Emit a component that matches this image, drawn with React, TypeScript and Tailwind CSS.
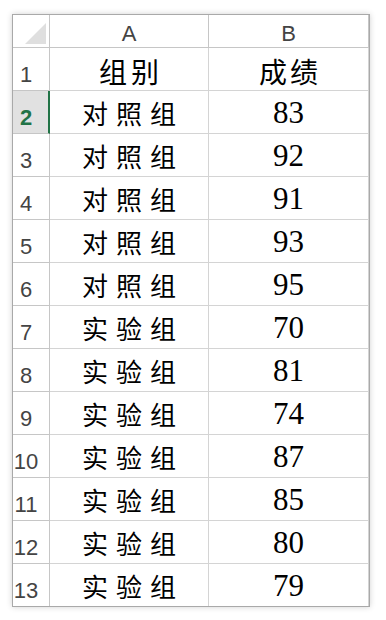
import React from "react";

const rows: [string, string][] = [
  ["对照组", "83"],
  ["对照组", "92"],
  ["对照组", "91"],
  ["对照组", "93"],
  ["对照组", "95"],
  ["实验组", "70"],
  ["实验组", "81"],
  ["实验组", "74"],
  ["实验组", "87"],
  ["实验组", "85"],
  ["实验组", "80"],
  ["实验组", "79"],
];

export default function App() {
  return (
    <div className="w-[386px] h-[620px] bg-white pt-[14px] pl-[12px]">
      <div className="w-[358px] border border-[#a9a9a9] shadow-[0_0_6px_rgba(0,0,0,0.18)] bg-white">
        <div className="grid grid-cols-[37px_159px_160px]">
          {/* header row */}
          <div className="h-[33px] border-r border-b border-[#c6c6c6] relative">
            <svg className="absolute left-[12px] top-[8px]" width="22" height="22" viewBox="0 0 22 22">
              <polygon points="21,0 21,21 0,21" fill="#dfdfdf" />
            </svg>
          </div>
          <div className="h-[33px] border-r border-b border-[#c6c6c6] flex items-end justify-center pb-[2px] font-['Liberation_Sans',Arial,sans-serif] text-[22px] leading-none text-[#444]">
            A
          </div>
          <div className="h-[33px] border-r border-b border-[#c6c6c6] flex items-end justify-center pb-[2px] font-['Liberation_Sans',Arial,sans-serif] text-[22px] leading-none text-[#444]">
            B
          </div>

          {/* row 1 */}
          <div className="h-[43px] border-r border-b border-[#c6c6c6] flex items-end justify-center pr-[10px] pb-[4px] font-['Liberation_Sans',Arial,sans-serif] text-[22px] leading-none text-[#444]">
            1
          </div>
          <div className="h-[43px] border-r border-b border-[#d4d4d4] flex items-end justify-center pb-[5px] pl-[4px] font-['Noto_Sans_CJK_SC',sans-serif] text-[28px] leading-none tracking-[4px] text-black">
            组别
          </div>
          <div className="h-[43px] border-r border-b border-[#d4d4d4] flex items-end justify-center pb-[5px] pl-[3px] font-['Noto_Sans_CJK_SC',sans-serif] text-[28px] leading-none tracking-[3px] text-black">
            成绩
          </div>

          {rows.map(([g, s], i) => {
            const n = i + 2;
            const last = i === rows.length - 1;
            const selected = n === 2;
            return (
              <React.Fragment key={n}>
                <div
                  className={
                    selected
                      ? "h-[43px] border-r-2 border-r-[#217346] border-b border-b-[#c6c6c6] bg-[#e1e1e1] flex items-end justify-center pr-[9px] pb-[4px] font-['Liberation_Sans',Arial,sans-serif] font-bold text-[22px] leading-none text-[#217346]"
                      : last
                      ? "h-[42px] border-r border-[#c6c6c6] flex items-end justify-center pr-[10px] pb-[4px] font-['Liberation_Sans',Arial,sans-serif] text-[22px] leading-none text-[#444]"
                      : "h-[43px] border-r border-b border-[#c6c6c6] flex items-end justify-center pr-[10px] pb-[4px] font-['Liberation_Sans',Arial,sans-serif] text-[22px] leading-none text-[#444]"
                  }
                >
                  {n}
                </div>
                <div
                  className={
                    last
                      ? "h-[42px] border-r border-[#d4d4d4] flex items-end justify-center pb-[7px] pl-[8px] font-['Noto_Sans_CJK_SC',sans-serif] text-[26px] leading-none tracking-[8px] text-black"
                      : "h-[43px] border-r border-b border-[#d4d4d4] flex items-end justify-center pb-[7px] pl-[8px] font-['Noto_Sans_CJK_SC',sans-serif] text-[26px] leading-none tracking-[8px] text-black"
                  }
                >
                  {g}
                </div>
                <div
                  className={
                    last
                      ? "h-[42px] border-r border-[#d4d4d4] flex items-end justify-center pb-[5px] font-['Liberation_Serif','Times_New_Roman',serif] text-[31px] leading-none text-black"
                      : "h-[43px] border-r border-b border-[#d4d4d4] flex items-end justify-center pb-[5px] font-['Liberation_Serif','Times_New_Roman',serif] text-[31px] leading-none text-black"
                  }
                >
                  {s}
                </div>
              </React.Fragment>
            );
          })}
        </div>
      </div>
    </div>
  );
}
